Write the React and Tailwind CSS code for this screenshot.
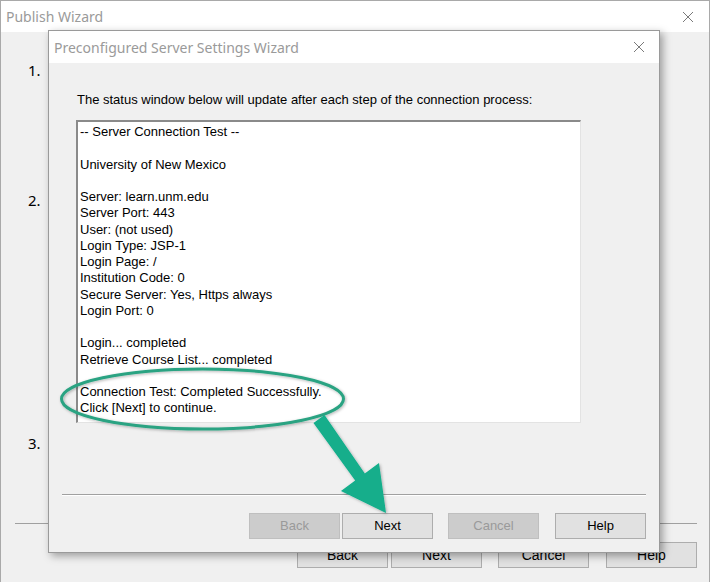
import React from "react";

const sans = { fontFamily: '"Liberation Sans", Arial, sans-serif' };
const ui = { fontFamily: '"Noto Sans", "Open Sans", sans-serif' };

function CloseX() {
  return (
    <svg width="12" height="12" viewBox="0 0 12 12">
      <path d="M1 1 L11 11 M11 1 L1 11" stroke="#7a7a7a" strokeWidth="1" fill="none" />
    </svg>
  );
}

function Btn({ children, disabled, big }) {
  return (
    <div
      className={
        "w-[91px] h-[26px] flex items-center justify-center border " +
        (disabled
          ? "bg-[#cccccc] border-[#bfbfbf] text-[#9a9a9a]"
          : "bg-[#e1e1e1] border-[#adadad] text-black") +
        (big ? " text-[14px]" : " text-[13px]")
      }
      style={sans}
    >
      {children}
    </div>
  );
}

const lines = [
  "-- Server Connection Test --",
  "",
  "University of New Mexico",
  "",
  "Server: learn.unm.edu",
  "Server Port: 443",
  "User: (not used)",
  "Login Type: JSP-1",
  "Login Page: /",
  "Institution Code: 0",
  "Secure Server: Yes, Https always",
  "Login Port: 0",
  "",
  "Login... completed",
  "Retrieve Course List... completed",
  "",
  "Connection Test: Completed Successfully.",
  "Click [Next] to continue.",
];

export default function App() {
  return (
    <div className="relative w-[710px] h-[582px] overflow-hidden bg-[#f0f0f0] border-l border-r border-t border-[#a9a9a9] flex flex-col">
      {/* outer title bar */}
      <div className="h-[31px] bg-white flex items-center justify-between pl-[5px] pr-[15px] shrink-0">
        <span className="text-[14px] text-[#9a9a9a]" style={ui}>Publish Wizard</span>
        <CloseX />
      </div>

      {/* outer body */}
      <div className="flex-1 flex flex-col">
        <div className="flex flex-col pl-[27px] text-[15px] text-black" style={ui}>
          <div className="mt-[28px] h-[20px] leading-[20px]">1.&nbsp;&nbsp;T</div>
          <div className="mt-[110px] h-[20px] leading-[20px]">2.&nbsp;&nbsp;C</div>
          <div className="mt-[223px] h-[20px] leading-[20px]">3.&nbsp;&nbsp;<span className="text-[#a08060]">I</span></div>
        </div>
        <div className="mt-[70px] ml-[14px] mr-[12px] border-t border-[#a0a0a0]" />
        <div className="mt-[18px] flex justify-end pr-[12px] gap-[3px]">
          <Btn big>Back</Btn>
          <Btn big>Next</Btn>
          <div className="w-[10px]" />
          <Btn big>Cancel</Btn>
          <div className="w-[11px]" />
          <Btn big>Help</Btn>
        </div>
      </div>

      {/* inner dialog (window over the outer one) */}
      <div className="absolute left-[47px] top-[29px] w-[612px] h-[523px] border border-[#9a9a9a] bg-[#f0f0f0] flex flex-col shadow-[3px_3px_8px_rgba(0,0,0,0.35)]">
        <div className="h-[32px] bg-white flex items-center justify-between pl-[5px] pr-[14px] shrink-0">
          <span className="text-[14px] text-[#9a9a9a]" style={ui}>Preconfigured Server Settings Wizard</span>
          <CloseX />
        </div>
        <div className="flex-1 flex flex-col">
          <div className="mt-[29px] ml-[28px] text-[13px] leading-[16px] text-black" style={sans}>
            The status window below will update after each step of the connection process:
          </div>
          <div
            className="mt-[12px] ml-[27px] w-[505px] h-[303px] bg-white border-t-2 border-l-2 border-r border-b border-t-[#8a8a8a] border-l-[#8a8a8a] border-r-[#e3e3e3] border-b-[#e3e3e3] pt-[2px] pl-[2px] text-[13px] leading-[16.25px] text-black"
            style={sans}
          >
            {lines.map((l, i) => (
              <div key={i} className="h-[16.25px] whitespace-pre">{l || " "}</div>
            ))}
          </div>
          <div className="mt-[71px] ml-[13px] w-[584px] border-t border-b border-t-[#a0a0a0] border-b-white" />
          <div className="mt-[17px] flex justify-end pr-[13px] gap-[2px]">
            <Btn disabled>Back</Btn>
            <Btn>Next</Btn>
            <div className="w-[11px]" />
            <Btn disabled>Cancel</Btn>
            <div className="w-[12px]" />
            <Btn>Help</Btn>
          </div>
        </div>
      </div>

      {/* green annotation overlay */}
      <svg className="absolute left-0 top-0 pointer-events-none" width="710" height="582" viewBox="0 0 710 582">
        <defs>
          <filter id="sh" x="-20%" y="-20%" width="140%" height="140%">
            <feDropShadow dx="1" dy="1" stdDeviation="1.5" floodColor="#000" floodOpacity="0.3" />
          </filter>
        </defs>
        <ellipse cx="201.5" cy="398" rx="141" ry="30" fill="none" stroke="#2aa382" strokeWidth="3" filter="url(#sh)" />
        <polygon
          points="312.5,422 323.5,414 363.8,472.5 378,462 385,512 340,490 354.2,479.5"
          fill="#12ae8b"
          filter="url(#sh)"
        />
      </svg>
    </div>
  );
}
